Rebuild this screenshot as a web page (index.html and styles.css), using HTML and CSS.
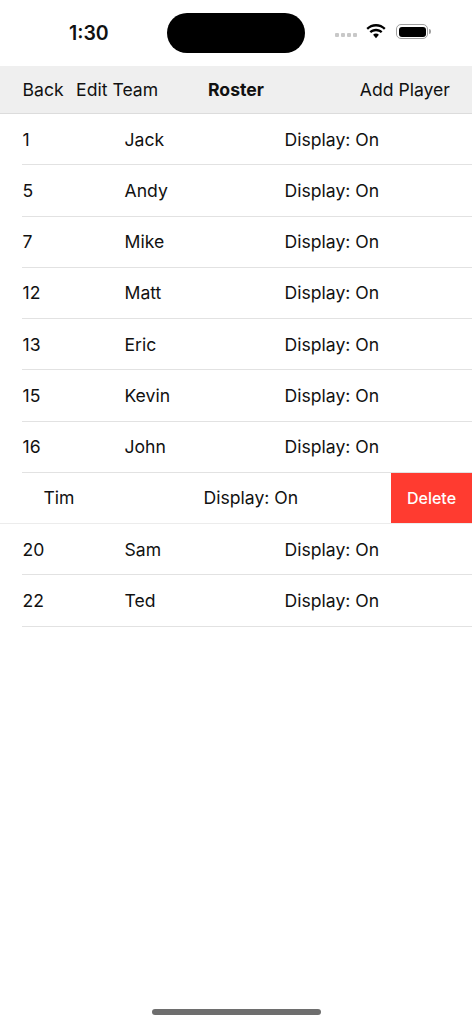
FILE: index.html
```html
<!DOCTYPE html>
<html lang="en">
<head>
  <meta charset="UTF-8">
  <meta name="viewport" content="width=device-width, initial-scale=1.0">
  <title>Roster</title>
  <link rel="stylesheet" href="styles.css">
</head>
<body>
  <div class="screen">
    <div class="status-bar">
      <span class="time">1:30</span>
      <div class="island"></div>
      <div class="status-icons">
        <div class="signal"><i></i><i></i><i></i><i></i></div>
        <svg class="wifi" width="20" height="15" viewBox="0 0 20 15">
          <path d="M10 2.6c-3.1 0-5.9 1.2-8 3.2L.4 4.1C2.9 1.6 6.3 0 10 0s7.1 1.6 9.6 4.1L18 5.8c-2.100-2-4.900-3.200-8-3.200z"/>
          <path d="M10 7.200c-1.800 0-3.500.7-4.800 1.900L3.500 7.400C5.200 5.800 7.500 4.800 10 4.800s4.800 1 6.500 2.600l-1.700 1.700C13.500 7.900 11.800 7.200 10 7.200z"/>
          <path d="M10 9.600c1.100 0 2.100.4 2.900 1.100L10 14.200l-2.900-3.500c.8-.7 1.800-1.100 2.900-1.100z"/>
        </svg>
        <div class="battery"><div class="battery-fill"></div></div>
        <div class="battery-cap"></div>
      </div>
    </div>

    <div class="nav-bar">
      <div class="nav-left">
        <span>Back</span>
        <span>Edit Team</span>
      </div>
      <span class="nav-title">Roster</span>
      <span class="nav-right">Add Player</span>
    </div>

    <div class="roster">
      <div class="row"><span>1</span><span>Jack</span><span>Display: On</span></div>
      <div class="row"><span>5</span><span>Andy</span><span>Display: On</span></div>
      <div class="row"><span>7</span><span>Mike</span><span>Display: On</span></div>
      <div class="row"><span>12</span><span>Matt</span><span>Display: On</span></div>
      <div class="row"><span>13</span><span>Eric</span><span>Display: On</span></div>
      <div class="row"><span>15</span><span>Kevin</span><span>Display: On</span></div>
      <div class="row"><span>16</span><span>John</span><span>Display: On</span></div>
      <div class="row row-swiped">
        <span>Tim</span><span>Display: On</span>
        <div class="delete">Delete</div>
      </div>
      <div class="row"><span>20</span><span>Sam</span><span>Display: On</span></div>
      <div class="row"><span>22</span><span>Ted</span><span>Display: On</span></div>
    </div>

    <div class="spacer"></div>
    <div class="home-area"><div class="home-bar"></div></div>
  </div>
</body>
</html>
```

FILE: styles.css
```css
* {
  margin: 0;
  padding: 0;
  box-sizing: border-box;
}
body {
  background: #fff;
  color: #111;
  font-family: Inter, "Liberation Sans", sans-serif;
  font-size: 17.600px;
}
.screen {
  height: 1024px;
  display: flex;
  flex-direction: column;
  overflow: hidden;
}

/* status bar */
.status-bar {
  height: 66px;
  display: flex;
  align-items: center;
  padding-bottom: 1px;
}
.time {
  width: 167px;
  padding-left: 69px;
  font-size: 19.500px;
  font-weight: 600;
  color: #111;
}
.island {
  width: 138px;
  height: 40px;
  background: #000;
  border-radius: 20px;
}
.status-icons {
  display: flex;
  align-items: center;
  margin-left: 30px;
  margin-top: -2px;
}
.signal {
  display: flex;
  gap: 2px;
  margin-top: 6px;
  margin-right: 9px;
}
.signal i {
  width: 4px;
  height: 4px;
  border-radius: 1px;
  background: #c8c8c8;
}
.wifi {
  margin-right: 10px;
}
.battery {
  width: 32px;
  height: 15px;
  border: 1.500px solid #a0a0a0;
  border-radius: 5px;
  padding: 1.500px;
}
.battery-fill {
  height: 100%;
  background: #000;
  border-radius: 3px;
}
.battery-cap {
  width: 2px;
  height: 5px;
  margin-left: 1px;
  background: #a0a0a0;
  border-radius: 0 2px 2px 0;
}

/* nav */
.nav-bar {
  height: 48px;
  background: #efefef;
  border-bottom: 1px solid #dcdcdc;
  padding: 0 22px 0 22.500px;
  display: flex;
  align-items: center;
  position: relative;
}
.nav-left {
  display: flex;
  gap: 12.500px;
}
.nav-title {
  position: absolute;
  left: 208px;
  font-weight: 700;
}
.nav-right {
  margin-left: auto;
}

/* list */
.row {
  height: 51.250px;
  margin-left: 22px;
  padding-left: 0.500px;
  display: grid;
  grid-template-columns: 102px 160px 1fr;
  align-items: center;
  border-bottom: 1px solid #e2e2e2;
}
.row-swiped {
  margin-left: 0;
  padding-left: 43.500px;
  grid-template-columns: 160px 1fr 81px;
  border-bottom-color: #ececec;
}
.delete {
  height: 100%;
  background: #ff3b30;
  color: #fff;
  font-size: 16px;
  font-weight: 500;
  display: flex;
  align-items: center;
  justify-content: center;
}

/* bottom */
.spacer {
  flex: 1;
}
.home-area {
  height: 15px;
  display: flex;
  justify-content: center;
}
.home-bar {
  width: 169px;
  height: 6px;
  background: #6e6e6e;
  border-radius: 3px;
}
```
